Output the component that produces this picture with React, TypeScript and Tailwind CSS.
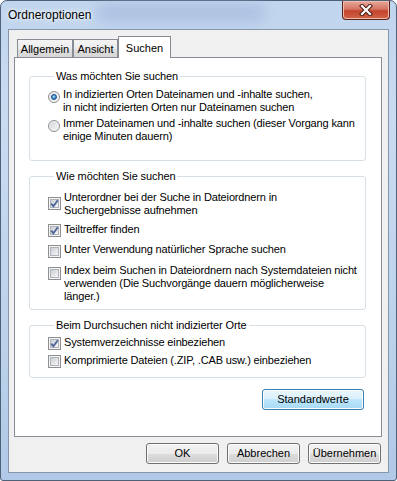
import type { ReactNode } from "react";

const tabs = [
  { label: "Allgemein", width: "w-[56px]" },
  { label: "Ansicht", width: "w-[45px]" },
];

function Radio({ checked, top }: { checked?: boolean; top: string }) {
  return (
    <span
      className={`${top} flex h-[12px] w-[12px] shrink-0 items-center justify-center rounded-full border border-[#8e8f8f] bg-[linear-gradient(135deg,#cfd2d7,#fbfbfb)] shadow-[inset_0_0_0_1px_#f4f4f4]`}
    >
      {checked && (
        <span className="h-[6px] w-[6px] rounded-full border border-[#1d4f86] bg-[radial-gradient(circle_at_45%_40%,#c6e6fc_0%,#4a9ae0_45%,#175596_100%)]" />
      )}
    </span>
  );
}

function Box({ checked, top }: { checked?: boolean; top: string }) {
  return (
    <span className={`${top} relative flex h-[13px] w-[13px] shrink-0 border border-[#8e8f8f] bg-[#f4f4f4] p-[1px]`}>
      <span className="h-full w-full border border-[#b0b4ba] bg-[linear-gradient(135deg,#cbcfd5,#f6f6f6)]" />
      {checked && (
        <svg className="absolute left-0 top-0" width="11" height="11" viewBox="0 0 11 11">
          <path d="M2.2 5.6 L4.4 8.2 L8.8 2.2" fill="none" stroke="#51669b" strokeWidth="1.9" />
        </svg>
      )}
    </span>
  );
}

function Option({
  kind,
  checked,
  top,
  lines,
}: {
  kind: "radio" | "check";
  checked?: boolean;
  top: string;
  lines: string[];
}) {
  return (
    <div className="flex items-start gap-[3px]">
      {kind === "radio" ? <Radio checked={checked} top={top} /> : <Box checked={checked} top={top} />}
      <div className="whitespace-nowrap leading-[13px] tracking-[-0.15px]">
        {lines.map((l) => (
          <div key={l}>{l}</div>
        ))}
      </div>
    </div>
  );
}

function Group({ title, className, children }: { title: string; className: string; children: ReactNode }) {
  return (
    <fieldset className={`w-[337px] rounded-[3px] border border-[#d5dfe5] pl-[18px] ${className}`}>
      <legend className="ml-[6px] px-[2px] leading-[14px] tracking-[-0.1px]">{title}</legend>
      {children}
    </fieldset>
  );
}

function WinButton({ label, focused, width }: { label: string; focused?: boolean; width: string }) {
  return (
    <button
      type="button"
      className={`${width} flex h-[21px] items-center justify-center rounded-[3px] border text-[11px] leading-none text-black shadow-[inset_0_0_0_1px_#fcfcfc] ${
        focused
          ? "border-[#3c7fb1] bg-[linear-gradient(180deg,#eaf6fd_0%,#d9f0fc_50%,#bee6fd_50%,#a7d9f5_100%)]"
          : "border-[#707070] bg-[linear-gradient(180deg,#f2f2f2_0%,#ebebeb_50%,#dddddd_50%,#cfcfcf_100%)]"
      }`}
    >
      {label}
    </button>
  );
}

export default function App() {
  return (
    <div className="h-[481px] w-[397px] overflow-hidden bg-white font-['Liberation_Sans',Arial,sans-serif] text-[11px] text-black">
      <div className="relative flex h-[481px] w-[397px] flex-col rounded-t-[7px] rounded-b-[3px] border border-[#4f6176] bg-[linear-gradient(180deg,#c0d5ee_0%,#c8dbf1_25%,#bcd2ec_70%,#b1c9e7_100%)] px-[7px] pb-[7px]">
        {/* blurred glass behind the caption */}
        <div className="absolute left-[95px] top-[3px] h-[18px] w-[170px] rounded-full bg-[#9db4d6] opacity-60 blur-[7px]" />

        <div className="relative flex h-[28px] items-center text-[12px] [text-shadow:0_0_6px_#ffffff,0_0_3px_#ffffff]">
          Ordneroptionen
        </div>

        <div className="absolute right-[6px] top-0 flex h-[19px] w-[48px] items-center justify-center rounded-b-[4px] border border-t-0 border-[#5a2219] bg-[linear-gradient(180deg,#e8a99c_0%,#d47563_45%,#c4442d_55%,#d0654a_100%)] shadow-[inset_0_0_0_1px_#eebbb0]">
          <svg width="14" height="12" viewBox="0 0 14 12">
            <path d="M3 2 L11 10 M11 2 L3 10" stroke="#4b1a12" strokeWidth="4.2" strokeLinecap="square" />
            <path d="M3 2 L11 10 M11 2 L3 10" stroke="#ffffff" strokeWidth="2.2" strokeLinecap="square" />
          </svg>
        </div>

        <div className="relative flex flex-1 flex-col border border-[#8596ab] bg-[#f0f0f0]">
          <div className="px-[5px] pt-[6px]">
            <div className="flex h-[21px] items-end pl-[3px]">
              {tabs.map((t) => (
                <div
                  key={t.label}
                  className={`${t.width} flex h-[18px] items-center justify-center border border-b-0 border-[#898c95] bg-[linear-gradient(180deg,#f4f4f4_0%,#ececec_50%,#e0e0e0_50%,#d6d6d6_100%)] pt-[1px]`}
                >
                  {t.label}
                </div>
              ))}
              <div className="relative z-10 -mb-[1px] flex h-[22px] w-[53px] items-start justify-center border border-b-0 border-[#898c95] bg-white pt-[3px]">
                Suchen
              </div>
            </div>

            <div className="h-[380px] w-[368px] border border-[#898c95] bg-white pl-[14px] pt-[11px]">
              <Group title="Was möchten Sie suchen" className="pb-[17px] pt-[5px]">
                <div className="flex flex-col gap-[3px]">
                  <Option
                    kind="radio"
                    checked
                    top="mt-[3px]"
                    lines={[
                      "In indizierten Orten Dateinamen und -inhalte suchen,",
                      "in nicht indizierten Orten nur Dateinamen suchen",
                    ]}
                  />
                  <Option
                    kind="radio"
                    top="mt-[3px]"
                    lines={["Immer Dateinamen und -inhalte suchen (dieser Vorgang kann", "einige Minuten dauern)"]}
                  />
                </div>
              </Group>

              <Group title="Wie möchten Sie suchen" className="mt-[8px] pb-[6px] pt-[8px]">
                <div className="flex flex-col gap-[6px]">
                  <Option
                    kind="check"
                    checked
                    top="mt-[6px]"
                    lines={["Unterordner bei der Suche in Dateiordnern in", "Suchergebnisse aufnehmen"]}
                  />
                  <Option kind="check" checked top="mt-[1px]" lines={["Teiltreffer finden"]} />
                  <Option kind="check" top="mt-[2px]" lines={["Unter Verwendung natürlicher Sprache suchen"]} />
                  <Option
                    kind="check"
                    top="mt-[3px]"
                    lines={[
                      "Index beim Suchen in Dateiordnern nach Systemdateien nicht",
                      "verwenden (Die Suchvorgänge dauern möglicherweise",
                      "länger.)",
                    ]}
                  />
                </div>
              </Group>

              <Group title="Beim Durchsuchen nicht indizierter Orte" className="mt-[8px] pb-[9px] pt-[4px]">
                <div className="flex flex-col gap-[4px]">
                  <Option kind="check" checked top="mt-[1px]" lines={["Systemverzeichnisse einbeziehen"]} />
                  <Option kind="check" top="mt-[1px]" lines={["Komprimierte Dateien (.ZIP, .CAB usw.) einbeziehen"]} />
                </div>
              </Group>

              <div className="mt-[11px] flex w-[337px] justify-end pr-[2px]">
                <WinButton label="Standardwerte" focused width="w-[102px]" />
              </div>
            </div>
          </div>

          <div className="mt-[6px] flex justify-end gap-[8px] pr-[7px]">
            <WinButton label="OK" width="w-[73px]" />
            <WinButton label="Abbrechen" width="w-[73px]" />
            <WinButton label="Übernehmen" width="w-[73px]" />
          </div>
        </div>
      </div>
    </div>
  );
}
